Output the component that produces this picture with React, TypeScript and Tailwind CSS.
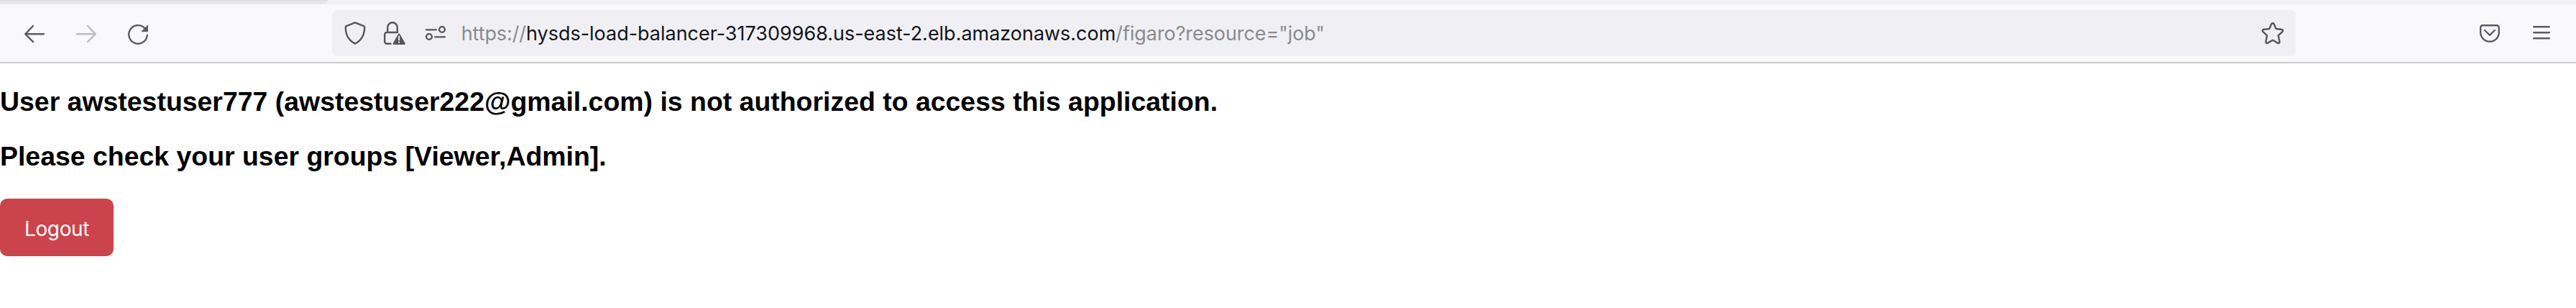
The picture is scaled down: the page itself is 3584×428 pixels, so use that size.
import type { ReactNode } from "react";

type IconProps = { label: string; className: string; children: ReactNode };

function IconButton({ label, className, children }: IconProps) {
  return (
    <button type="button" aria-label={label} className={`block h-8 w-8 shrink-0 ${className}`}>
      <svg
        viewBox="0 0 32 32"
        className="block h-8 w-8"
        fill="none"
        stroke="currentColor"
        strokeWidth="2.4"
        strokeLinecap="round"
        strokeLinejoin="round"
      >
        {children}
      </svg>
    </button>
  );
}

function NavigationButtons() {
  return (
    <div className="flex w-[462px] shrink-0 items-center gap-10 pl-8">
      <IconButton label="Back" className="text-[#5b5b66]">
        <path d="M29 17.3H3.4M14 6L3.2 17.3L14 28.2" />
      </IconButton>
      <IconButton label="Forward" className="text-[#bcbcc1]">
        <path d="M3 17.3h25.6M18 6l10.8 11.3L18 28.2" />
      </IconButton>
      <IconButton label="Reload" className="text-[#5b5b66]">
        <path d="M28.8 18.9A12.8 12.8 0 1 1 25 8.8" />
        <path d="M29.4 5.6v8h-8z" fill="currentColor" strokeWidth="1.2" />
      </IconButton>
    </div>
  );
}

function AddressBar() {
  return (
    <div className="flex h-16 w-[2732px] shrink-0 items-center rounded-lg bg-[#f0f0f4] px-4">
      <IconButton label="Tracking protection" className="text-[#56565b]">
        <path d="M16 1.4L28.4 6.4Q29.2 6.7 29.2 7.7C29.2 18.5 25.2 26 16 30.6C6.8 26 2.8 18.5 2.8 7.7Q2.8 6.7 3.6 6.4Z" />
      </IconButton>
      <IconButton label="Connection security" className="ml-[22px] text-[#56565b]">
        <path d="M7.2 15V8.4a6.8 7.2 0 0 1 13.6 0V15M11.6 30.8H6.2a3 3 0 0 1-3-3V18a3 3 0 0 1 3-3H21" />
        <path d="M23.2 17.6L30.8 30.8H15.6Z" fill="currentColor" strokeWidth="2.2" />
        <path d="M23.2 20.6v5M23.2 28.6v.3" className="stroke-[#f0f0f4]" strokeWidth="2" />
      </IconButton>
      <IconButton label="Permissions" className="ml-[25px] text-[#56565b]">
        <path d="M3.9 11.3H17.9M16.1 21.3H30" strokeWidth="2.2" />
        <circle cx="26" cy="11" r="3.9" />
        <circle cx="8" cy="21" r="3.9" />
      </IconButton>
      <div className="ml-[20.7px] flex-1 whitespace-pre pt-0.5 font-['Inter',sans-serif] text-[27px] leading-8 text-[#15141a]">
        <span className="tracking-[-0.09px] text-[#8b8a8f]">https://</span>
        <span className="tracking-[-0.02px]">hysds-load-balancer-317309968.us-east-2.elb.amazonaws.com</span>
        <span className="tracking-[-0.08px] text-[#8b8a8f]">/figaro?resource="job"</span>
      </div>
      <IconButton label="Bookmark this page" className="text-[#56565b]">
        <path d="M14.3 3.3Q16 1.2 17.7 3.3L20.7 10L28.6 11Q31.2 11.9 29.7 13.9L23.8 19.3L25.6 28Q25.4 30.6 23.2 29.9L16 25.8L8.8 29.9Q6.6 30.6 6.4 28L8.200 19.300L2.300 13.900Q0.800 11.900 3.400 11L11.300 10Z" />
      </IconButton>
    </div>
  );
}

function BrowserChrome() {
  return (
    <header>
      <div className="h-1.5 bg-[#f0f0f4]">
        <div className="h-1.5 w-[456px] rounded-br-full bg-linear-to-b from-[#dfdfe4] to-[#ebebef]" />
      </div>
      <div className="flex h-[82px] items-center border-b-2 border-[#cccccc] bg-[#f9f9fb]">
        <NavigationButtons />
        <AddressBar />
        <div className="flex flex-1 items-center justify-end gap-10 pr-8">
          <IconButton label="Save to Pocket" className="text-[#5b5b66]">
            <path d="M6.2 5.2H25.8a3 3 0 0 1 3 3V15a12.8 12.8 0 0 1-25.6 0V8.2a3 3 0 0 1 3-3Z" />
            <path d="M9 12l7 6.8l7-6.8" />
          </IconButton>
          <IconButton label="Open menu" className="text-[#5b5b66]">
            <path d="M5.200 7.300H26.800M5.200 15.300H26.800M5.200 23.300H26.800" />
          </IconButton>
        </div>
      </div>
    </header>
  );
}

export default function App() {
  return (
    <div className="h-[428px] w-[3584px] overflow-hidden bg-white">
      <BrowserChrome />
      <main className="pt-8 font-['Liberation_Sans',sans-serif] text-black">
        <h3 className="h-[76px] text-[37.44px] font-bold leading-[42px]">
          User awstestuser777 (awstestuser222@gmail.com) is not authorized to access this application.
        </h3>
        <h3 className="h-20 text-[37.44px] font-bold leading-[42px]">
          Please check your user groups [Viewer,Admin].
        </h3>
        <button
          type="button"
          className="flex h-20 w-[158px] items-center justify-center rounded-[10px] bg-[#cc444b] pt-[3px] font-['Inter',sans-serif] text-[28px] tracking-[-0.4px] text-white"
        >
          Logout
        </button>
      </main>
    </div>
  );
}
